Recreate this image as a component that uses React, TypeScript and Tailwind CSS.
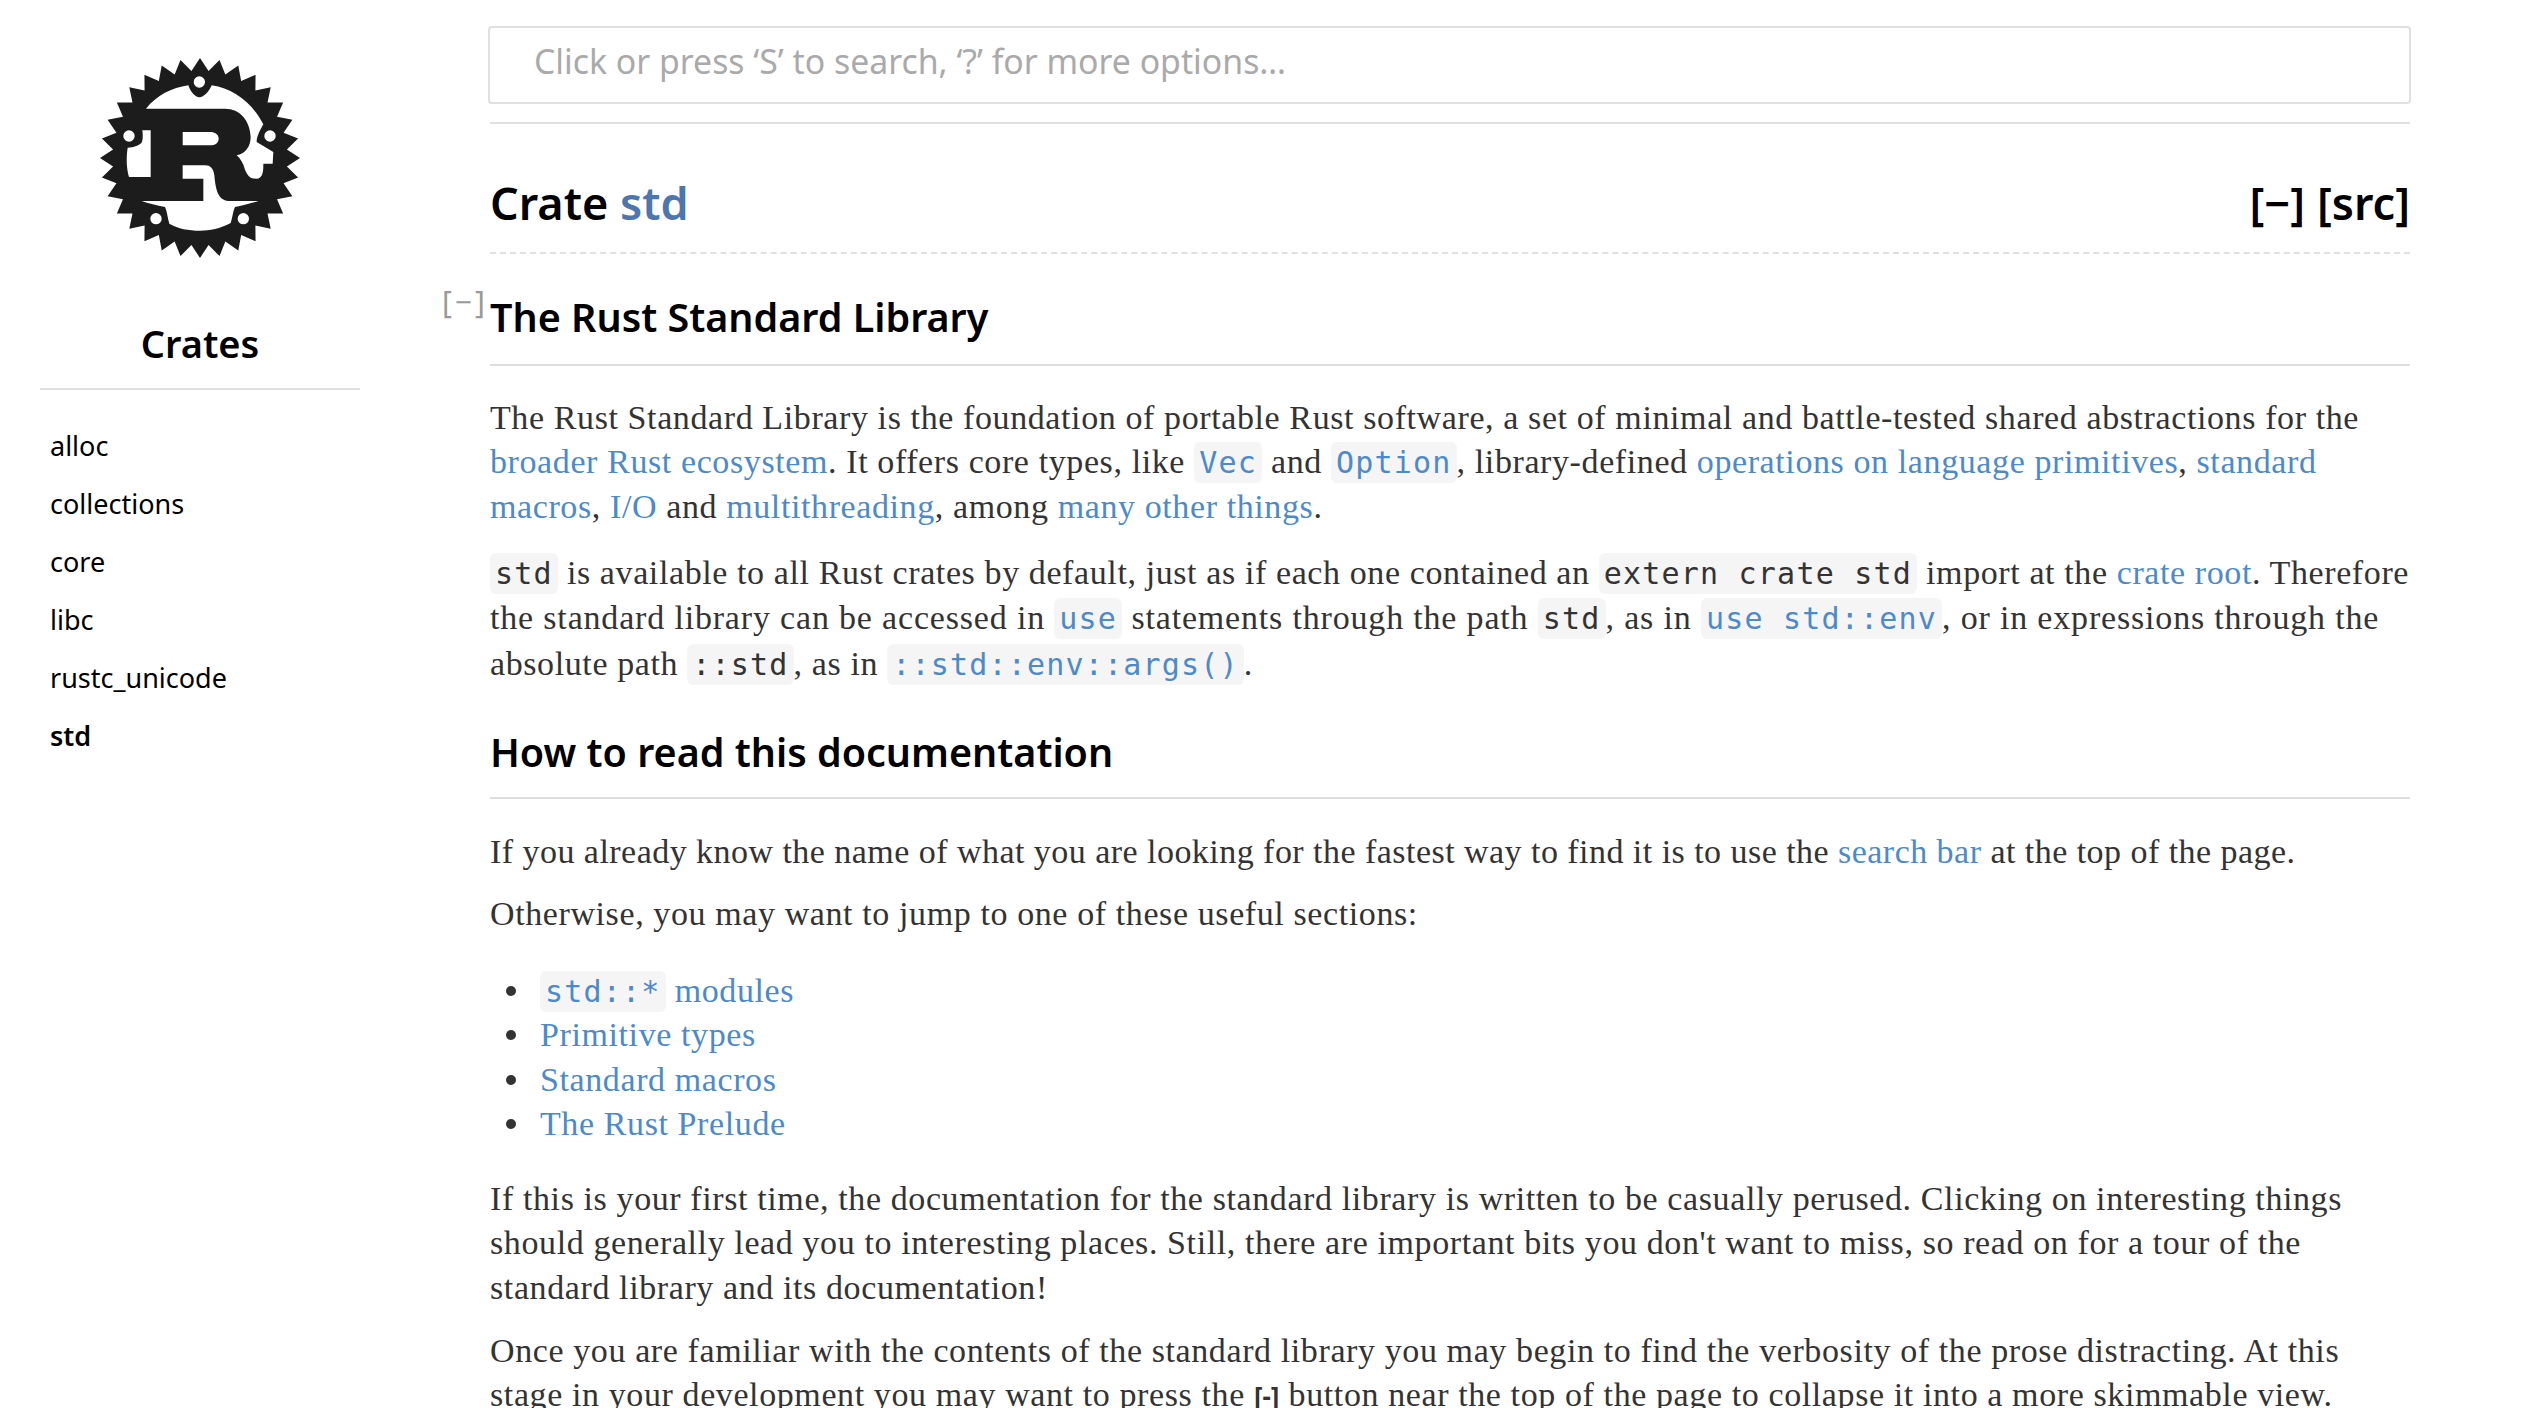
const sans = "font-['Noto_Sans','Lato',sans-serif]";

const gearPoints = () => {
  const pts: string[] = [];
  for (let i = 0; i < 32; i++) {
    const a = (i * 2 * Math.PI) / 32;
    const b = ((i + 0.5) * 2 * Math.PI) / 32;
    pts.push(`${420 + 300 * Math.sin(a)},${383 - 300 * Math.cos(a)}`);
    pts.push(`${420 + 262 * Math.sin(b)},${383 - 262 * Math.cos(b)}`);
  }
  return pts.join(" ");
};

const RustLogo = () => (
  <svg viewBox="120 83 600 600" className="w-[200px] h-[200px]">
    <polygon points={gearPoints()} fill="#1c1c1c" />
    <g fill="#fff">
      {/* top and right opening */}
      <path d="M258 235 C290 195 335 172 385 165 C392 185 405 200 418 201 C432 200 446 185 455 165 C520 175 575 215 610 282 C600 300 590 318 590 335 L640 365 L638 400 L610 400 C610 420 610 445 588 445 C570 445 562 435 555 418 C550 400 542 385 530 375 C555 370 572 350 572 320 C570 270 540 235 495 235 Z" />
      {/* counter of the R */}
      <path d="M368 305 L450 305 C465 305 476 312 476 325 C476 338 465 345 450 345 L368 345 Z" />
      {/* bottom opening */}
      <path d="M245 512 L430 512 L430 445 L368 445 L368 405 L435 405 C452 405 460 415 463 435 C467 480 475 510 505 512 L595 512 C570 520 545 525 525 530 C518 545 518 560 512 578 C480 595 450 601 420 601 C385 601 355 595 328 580 C322 560 322 545 315 530 C290 525 265 520 245 512 Z" />
      {/* left opening */}
      <path d="M247 300 L272 300 L272 440 L207 440 C200 415 198 385 203 352 C220 352 240 345 246 335 C250 322 248 310 247 300 Z" />
      <circle cx="418" cy="155" r="17" />
      <circle cx="207" cy="317" r="17" />
      <circle cx="630" cy="317" r="17" />
      <circle cx="288" cy="565" r="17" />
      <circle cx="550" cy="565" r="17" />
    </g>
  </svg>
);

const A = ({ children }: { children: React.ReactNode }) => <a className="text-[#4d8ac9]">{children}</a>;

const C = ({ children }: { children: React.ReactNode }) => (
  <code className="bg-[#f5f5f5] rounded-[6px] px-[5px] py-[3px] font-['DejaVu_Sans_Mono',monospace] text-[30px] leading-none tracking-[1.2px]">
    {children}
  </code>
);

const Li = ({ children }: { children: React.ReactNode }) => (
  <li className="flex items-center gap-[24px]">
    <span className="w-[10px] h-[10px] rounded-full bg-[#333]" />
    <A>{children}</A>
  </li>
);

const crates = ["alloc", "collections", "core", "libc", "rustc_unicode"];

export default function App() {
  return (
    <div className="flex h-[1408px] overflow-hidden bg-white text-[#333] font-['Liberation_Serif',serif]">
      <aside className={`w-[488px] shrink-0 pl-[40px] pt-[58px] ${sans}`}>
        <div className="w-[320px] flex flex-col items-center border-b-2 border-[#e0e0e0] pb-[15px]">
          <RustLogo />
          <h3 className="mt-[55px] text-[38px] leading-[60px] font-semibold text-black">Crates</h3>
        </div>
        <ul className="pl-[10px] pt-[27px] text-[27px] leading-[58px] text-black">
          {crates.map((c) => (
            <li key={c}>{c}</li>
          ))}
          <li className="font-semibold">std</li>
        </ul>
      </aside>
      <main className="w-[1923px] pt-[26px]">
        <div className={`h-[78px] border-2 border-[#e0e0e0] rounded-[4px] pl-[44px] flex items-center pb-[7px] text-[33.8px] text-[#aaa] ${sans}`}>
          Click or press ‘S’ to search, ‘?’ for more options…
        </div>
        <div className="ml-[2px] mr-[1px]">
          <div className={`mt-[18px] border-t-2 border-[#e0e0e0] border-b-2 border-b-[#e0e0e0] [border-bottom-style:dashed] h-[132px] pt-[29px] flex justify-between items-center text-[45px] font-semibold text-black ${sans}`}>
            <h1>
              Crate <span className="text-[#4d76ae]">std</span>
            </h1>
            <span>[−] [src]</span>
          </div>
          <div className="relative">
            <span className={`absolute left-[-48px] top-[-10px] text-[30px] tracking-[3px] text-[#999] ${sans}`}>[−]</span>
            <h2 className={`mt-[35px] h-[77px] border-b-2 border-[#ddd] text-[39.5px] leading-[56px] font-semibold text-black ${sans}`}>
              The Rust Standard Library
            </h2>
          </div>
          <div className="text-[34px] tracking-[0.6px] leading-[44.3px] whitespace-nowrap">
            <p className="mt-[30px]">
              The Rust Standard Library is the foundation of portable Rust software, a set of minimal and battle-tested shared abstractions for the
              <br />
              <A>broader Rust ecosystem</A>. It offers core types, like <A><C>Vec</C></A> and <A><C>Option</C></A>, library-defined <A>operations on language primitives</A>, <A>standard</A>
              <br />
              <A>macros</A>, <A>I/O</A> and <A>multithreading</A>, among <A>many other things</A>.
            </p>
            <p className="mt-[21px] leading-[45.5px]">
              <C>std</C> is available to all Rust crates by default, just as if each one contained an <C>extern crate std</C> import at the <A>crate root</A>. Therefore
              <br />
              <span className="tracking-[0.82px]">
                the standard library can be accessed in <A><C>use</C></A> statements through the path <C>std</C>, as in <A><C>use std::env</C></A>, or in expressions through the
              </span>
              <br />
              absolute path <C>::std</C>, as in <A><C>::std::env::args()</C></A>.
            </p>
            <h2 className={`mt-[38px] h-[75px] border-b-2 border-[#ddd] text-[39.5px] tracking-normal leading-[56px] font-semibold text-black ${sans}`}>
              How to read this documentation
            </h2>
            <p className="mt-[31px] tracking-[0.46px]">
              If you already know the name of what you are looking for the fastest way to find it is to use the <A>search bar</A> at the top of the page.
            </p>
            <p className="mt-[17px]">Otherwise, you may want to jump to one of these useful sections:</p>
            <ul className="mt-[33px] pl-[16px]">
              <Li><C>std::*</C> modules</Li>
              <Li>Primitive types</Li>
              <Li>Standard macros</Li>
              <Li>The Rust Prelude</Li>
            </ul>
            <p className="mt-[31px]">
              If this is your first time, the documentation for the standard library is written to be casually perused. Clicking on interesting things
              <br />
              should generally lead you to interesting places. Still, there are important bits you don't want to miss, so read on for a tour of the
              <br />
              standard library and its documentation!
            </p>
            <p className="mt-[19px]">
              Once you are familiar with the contents of the standard library you may begin to find the verbosity of the prose distracting. At this
              <br />
              stage in your development you may want to press the <strong className={`${sans} text-[26px] tracking-normal`}>[-]</strong> button near the top of the page to collapse it into a more skimmable view.
            </p>
          </div>
        </div>
      </main>
    </div>
  );
}
